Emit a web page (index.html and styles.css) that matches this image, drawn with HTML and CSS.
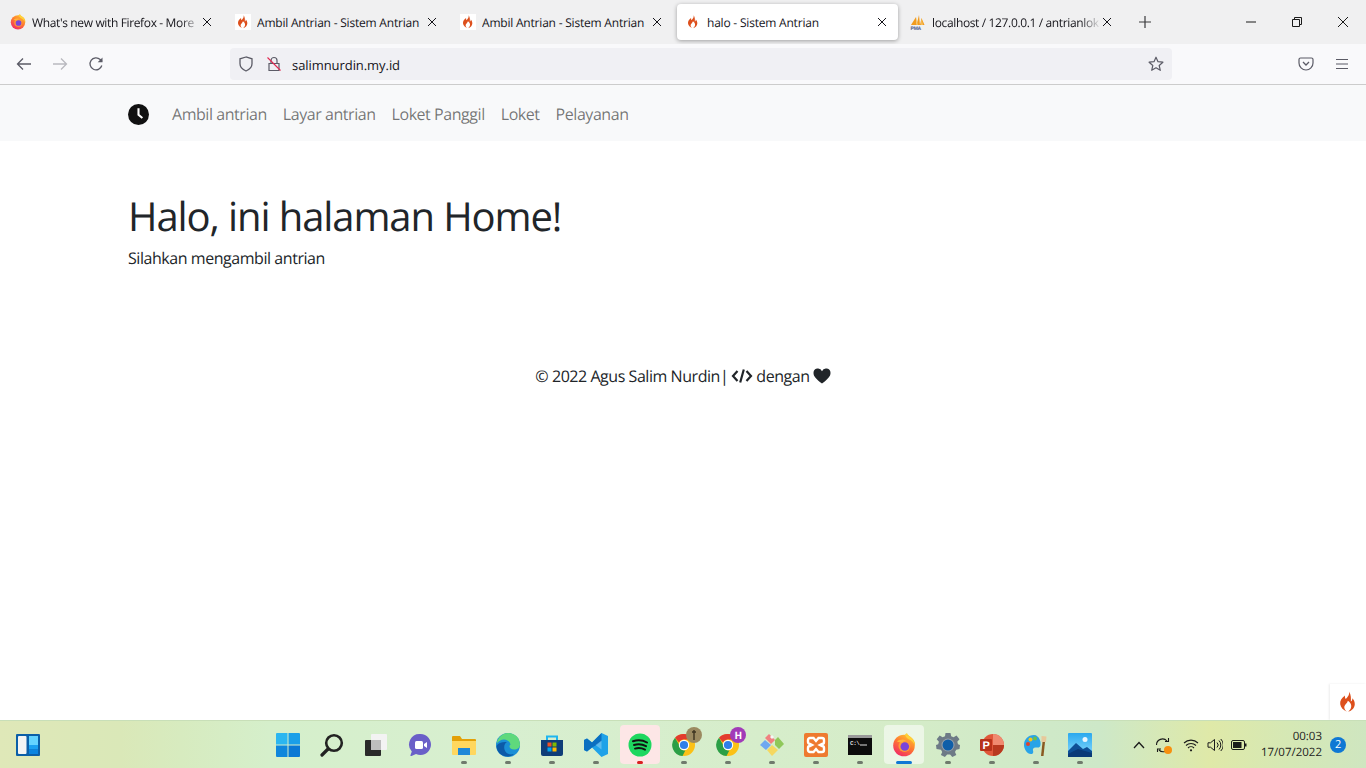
FILE: index.html
```html
<!DOCTYPE html>
<html lang="id">
<head>
<meta charset="UTF-8">
<title>halo - Sistem Antrian</title>
<link rel="stylesheet" href="styles.css">
</head>
<body>

<svg class="defs" width="0" height="0">
  <defs>
    <symbol id="flame" viewBox="0 0 24 24">
      <path fill="#dd4f1c" d="M13 .5c1 3.500-1.400 6-3.400 8.300C8.800 7.800 8.500 6.500 8.700 5 5 7.800 3 11 3.500 14.500c.5 3.600 3.400 6.500 7.300 8-2.200-1.600-3.300-3.700-2.700-5.800.6-2.200 3-3.400 3.800-6.200 2.500 1.800 4 4 3.600 6.700-.3 2.100-1.500 3.900-3.300 5.300 4.200-1 7-4.200 7.200-8.100.1-2.700-1.100-4.900-2.600-6.500 0 1.600-.4 2.800-1.700 3.600C15.400 8.500 15.500 4 13 .5z"/>
    </symbol>
    <symbol id="close" viewBox="0 0 12 12">
      <path d="M2 2l8 8M10 2l-8 8" fill="none" stroke="currentColor" stroke-width="1"/>
    </symbol>
    <symbol id="firefox" viewBox="0 0 24 24">
      <defs>
        <linearGradient id="ffbody" x1="0.800" y1="0" x2="0.200" y2="1">
          <stop offset="0" stop-color="#ffc82e"/>
          <stop offset="0.450" stop-color="#ff7a30"/>
          <stop offset="1" stop-color="#f0246a"/>
        </linearGradient>
      </defs>
      <path fill="#ffd23a" d="M15 0c-2.300 1.300-3.200 3.500-3.400 5 4 .2 7 2.500 8.200 6l3 1c.3-1.200.1-2.300-.3-3.200-.5-1.500-1.500-3-2.400-3.800.6 1.300 1 2.500 1.100 3.400C20 5 17.300 3.500 15.500 1c-.3-.4-.4-.6-.5-1z"/>
      <circle cx="12" cy="12.500" r="10.800" fill="url(#ffbody)"/>
      <path fill="#ffd23a" d="M13 1.800c5 .7 9.200 4.500 9.800 10.700-1-2.600-3-5-6-6.200-1.700-.7-3-2.400-3.800-4.500z"/>
      <circle cx="12.500" cy="13" r="6" fill="#ff9a36"/>
      <circle cx="12.800" cy="13.500" r="4.300" fill="#7b45d8"/>
      <path fill="#ffb53a" d="M5 8.500c2-1.600 4.500-2.300 7-1.700 1 .2 1.800.6 2.500 1.100-1.500-.2-3.300.3-4 1.600-1.500 0-3.500-.1-5.500-1z"/>
    </symbol>
    <symbol id="chrome" viewBox="0 0 24 24">
      <circle cx="12" cy="12" r="11" fill="#fbc116"/>
      <path fill="#e33b2e" d="M12 1a11 11 0 0 1 9.500 5.500H12a5.500 5.500 0 0 0-5 3L3 4.700A11 11 0 0 1 12 1z"/>
      <path fill="#2b9f46" d="M3 4.700L7.500 12.500a5.500 5.500 0 0 0 5.800 5L10.500 23A11 11 0 0 1 3 4.700z"/>
      <circle cx="12" cy="12" r="5.200" fill="#fff"/>
      <circle cx="12" cy="12" r="4.100" fill="#2f7fe8"/>
    </symbol>
  </defs>
</svg>

<div class="tabstrip">
  <div class="tab">
    <svg class="favicon"><use href="#firefox"/></svg>
    <span class="tab-title tab-title-fade">What's new with Firefox - More</span>
    <svg class="tab-close"><use href="#close"/></svg>
  </div>
  <div class="tab">
    <span class="favicon-box"><svg class="favicon-flame"><use href="#flame"/></svg></span>
    <span class="tab-title">Ambil Antrian - Sistem Antrian</span>
    <svg class="tab-close"><use href="#close"/></svg>
  </div>
  <div class="tab">
    <span class="favicon-box"><svg class="favicon-flame"><use href="#flame"/></svg></span>
    <span class="tab-title">Ambil Antrian - Sistem Antrian</span>
    <svg class="tab-close"><use href="#close"/></svg>
  </div>
  <div class="tab tab-active">
    <span class="favicon-box"><svg class="favicon-flame"><use href="#flame"/></svg></span>
    <span class="tab-title">halo - Sistem Antrian</span>
    <svg class="tab-close"><use href="#close"/></svg>
  </div>
  <div class="tab">
    <svg class="favicon" viewBox="0 0 16 16">
      <path fill="#f29b1d" d="M1 11L6 3l.5 8zM6.500 11L9 1l1 10zM10 11l1.500-7 3 7z"/>
      <path fill="#f6c15c" d="M6 3l2 8H6.500zM11.500 4L13 11h-2z"/>
      <text class="pma-text" x="0.500" y="15.500">PMA</text>
    </svg>
    <span class="tab-title tab-title-fade">localhost / 127.0.0.1 / antrianlok</span>
    <svg class="tab-close"><use href="#close"/></svg>
  </div>
  <svg class="newtab" viewBox="0 0 14 14"><path d="M7 1v12M1 7h12" fill="none" stroke="#3a3a3c" stroke-width="1.200"/></svg>
  <div class="window-controls">
    <svg class="win-btn" viewBox="0 0 12 12"><path d="M1 6h10" stroke="#1a1a1a" stroke-width="1"/></svg>
    <svg class="win-btn" viewBox="0 0 12 12"><path d="M1.500 3.500h7v7h-7zM3.500 3.500v-2h7v7h-2" fill="none" stroke="#1a1a1a" stroke-width="1"/></svg>
    <svg class="win-btn" viewBox="0 0 12 12"><path d="M1 1l10 10M11 1L1 11" fill="none" stroke="#1a1a1a" stroke-width="1"/></svg>
  </div>
</div>

<div class="toolbar">
  <div class="toolbar-nav">
    <svg class="tool-icon" viewBox="0 0 16 16"><path d="M15 8H1.500M7 2.500L1.500 8 7 13.500" fill="none" stroke="#5b5b66" stroke-width="1.300"/></svg>
    <svg class="tool-icon tool-icon-off" viewBox="0 0 16 16"><path d="M1 8h13.500M9 2.500L14.500 8 9 13.500" fill="none" stroke="#5b5b66" stroke-width="1.300"/></svg>
    <svg class="tool-icon" viewBox="0 0 16 16"><path d="M13.800 9.500A6 6 0 1 1 12.200 3.500L14 5.500" fill="none" stroke="#5b5b66" stroke-width="1.300"/><path d="M14.500 1.500v4.800H9.700z" fill="#5b5b66"/></svg>
  </div>
  <div class="urlbar">
    <svg class="shield" viewBox="0 0 16 16"><path d="M8 1L2 2.800v5c0 3.500 3 6 6 7.200 3-1.200 6-3.700 6-7.200v-5z" fill="none" stroke="#5b5b66" stroke-width="1.300"/></svg>
    <svg class="lock" viewBox="0 0 16 16"><path d="M3 7.500h10v7H3zM5 7.500V4.500a3 3 0 0 1 6 0v3" fill="none" stroke="#5b5b66" stroke-width="1.200"/><path d="M1.500 1.500l13 13" stroke="#e22850" stroke-width="1.100"/></svg>
    <span class="url-text">salimnurdin.my.id</span>
    <svg class="star" viewBox="0 0 16 16"><path d="M8 1.200l2 4.500 4.900.5-3.700 3.300 1.100 4.800L8 11.800l-4.300 2.500 1.100-4.800L1.100 6.200 6 5.700z" fill="none" stroke="#5b5b66" stroke-width="1.200" stroke-linejoin="round"/></svg>
  </div>
  <div class="toolbar-end">
    <svg class="tool-icon" viewBox="0 0 16 16"><path d="M2.500 2h11A1.500 1.500 0 0 1 15 3.500V7A7 7 0 0 1 1 7V3.500A1.500 1.500 0 0 1 2.500 2z" fill="none" stroke="#5b5b66" stroke-width="1.200"/><path d="M5 6l3 3 3-3" fill="none" stroke="#5b5b66" stroke-width="1.300"/></svg>
    <svg class="tool-icon" viewBox="0 0 16 16"><path d="M2 3.500h12M2 8h12M2 12.500h12" fill="none" stroke="#5b5b66" stroke-width="1.200"/></svg>
  </div>
</div>

<nav class="navbar">
  <a class="brand" href="#">
    <svg class="brand-icon" viewBox="0 0 20 20"><circle cx="10" cy="10" r="10" fill="#111"/><path d="M10 4v6.300l3.700 3" fill="none" stroke="#fff" stroke-width="2"/></svg>
  </a>
  <a class="nav-link" href="#">Ambil antrian</a>
  <a class="nav-link" href="#">Layar antrian</a>
  <a class="nav-link" href="#">Loket Panggil</a>
  <a class="nav-link" href="#">Loket</a>
  <a class="nav-link" href="#">Pelayanan</a>
</nav>

<main class="content">
  <h1>Halo, ini halaman Home!</h1>
  <p>Silahkan mengambil antrian</p>
</main>

<footer class="credit">
  <span>© 2022 Agus Salim Nurdin|</span>
  <svg class="credit-code" viewBox="0 0 22 16"><path d="M6.500 3L2 8l4.500 5M15.500 3L20 8l-4.500 5M12.800 1.500L9.200 14.500" fill="none" stroke="#212529" stroke-width="2.200"/></svg>
  <span>dengan</span>
  <svg class="credit-heart" viewBox="0 0 18 16"><path d="M9 15.500C3 11 .5 8.300.5 5A4.400 4.400 0 0 1 9 3.300 4.400 4.400 0 0 1 17.500 5c0 3.300-2.500 6-8.500 10.500z" fill="#212529"/></svg>
</footer>

<div class="ci-tab"><svg class="ci-flame"><use href="#flame"/></svg></div>

<div class="taskbar">
  <svg class="widgets" viewBox="0 0 24 22">
    <rect width="24" height="22" rx="1" fill="#0b5fa8"/>
    <rect x="2" y="2" width="8.500" height="18" rx="1" fill="#f4f4f4"/>
    <rect x="13" y="2" width="9" height="9" fill="#63d3ff"/>
    <rect x="13" y="11" width="9" height="4.500" fill="#1aa0f0"/>
    <rect x="13" y="15.500" width="9" height="4.500" fill="#0a84e0"/>
  </svg>

  <div class="dock">
    <div class="dock-item dock-plain">
      <svg class="dock-icon" viewBox="0 0 24 24">
        <path fill="#2bb6f0" d="M0 1a1 1 0 0 1 1-1h10.500v11.500H0z"/>
        <path fill="#1a9fe8" d="M12.500 0H23a1 1 0 0 1 1 1v10.500H12.500z"/>
        <path fill="#0f86dc" d="M0 12.500h11.500V24H1a1 1 0 0 1-1-1z"/>
        <path fill="#0a78d4" d="M12.500 12.500H24V23a1 1 0 0 1-1 1H12.500z"/>
      </svg>
    </div>
    <div class="dock-item dock-plain">
      <svg class="dock-icon" viewBox="0 0 24 24"><circle cx="14" cy="10" r="7.800" fill="none" stroke="#222" stroke-width="2.600"/><path d="M8 16l-6 6" stroke="#222" stroke-width="3.200" stroke-linecap="round"/></svg>
    </div>
    <div class="dock-item dock-plain">
      <svg class="dock-icon" viewBox="0 0 24 24">
        <rect x="1" y="7" width="16" height="16" rx="1" fill="#2a2a2a"/>
        <rect x="7" y="1" width="16" height="16" rx="1" fill="#f3f3f3"/>
        <rect x="7" y="7" width="10" height="10" fill="#bdbdbd"/>
      </svg>
    </div>
    <div class="dock-item dock-plain">
      <svg class="dock-icon" viewBox="0 0 24 24">
        <path fill="#6a5fc8" d="M12.500 1a10.500 10.500 0 1 1-4.500 20l-4.500 2c-.8.300-1.300-.3-1-1l1.300-3.500A10.500 10.500 0 0 1 12.500 1z"/>
        <rect x="7" y="8" width="8" height="8" rx="1.500" fill="#fff"/>
        <path fill="#fff" d="M16 11l3-2v6l-3-2z"/>
      </svg>
    </div>
    <div class="dock-item">
      <svg class="dock-icon" viewBox="0 0 24 24">
        <path fill="#e3a008" d="M0 4a1 1 0 0 1 1-1h7l2 3h13a1 1 0 0 1 1 1v3H0z"/>
        <path fill="#ffd75e" d="M0 8h24v13a1 1 0 0 1-1 1H1a1 1 0 0 1-1-1z"/>
        <rect x="6" y="15" width="12" height="7" fill="#1e88d8"/>
      </svg>
    </div>
    <div class="dock-item">
      <svg class="dock-icon" viewBox="0 0 24 24">
        <circle cx="12" cy="12" r="12" fill="#1a8fd6"/>
        <path fill="#5fd97c" d="M12 0c7 0 12 5 12 11.500 0 3-2.500 5-6 5-3 0-4.500-1.500-4.500-3 0-1 .5-1.500 1-2C14 8.500 11 6.500 8 6.500 5 6.500 2.200 8.300.7 10.500 1.800 4.500 6.500 0 12 0z"/>
        <path fill="#0c5aa8" d="M.5 13c0 5 4 10.500 11 10.500 2.500 0 5-1 6.500-2.500-5 1.500-8.500-1-9.500-4.500C7.500 13 9 10 11 9 6.500 8.500 2 10 .5 13z"/>
      </svg>
    </div>
    <div class="dock-item">
      <svg class="dock-icon" viewBox="0 0 24 24">
        <path fill="none" stroke="#1fb6ef" stroke-width="2" d="M7 7V3.500h10V7"/>
        <path fill="#0f3d78" d="M1 7h22v14a2 2 0 0 1-2 2H3a2 2 0 0 1-2-2z"/>
        <rect x="7.500" y="9.500" width="4" height="4" fill="#f25022"/>
        <rect x="12.500" y="9.500" width="4" height="4" fill="#7fba00"/>
        <rect x="7.500" y="14.500" width="4" height="4" fill="#00a4ef"/>
        <rect x="12.500" y="14.500" width="4" height="4" fill="#ffb900"/>
      </svg>
    </div>
    <div class="dock-item">
      <svg class="dock-icon" viewBox="0 0 24 24">
        <path fill="#1fa2e8" d="M17.500 0L24 3v18l-6.500 3-9.500-9.500L3 18.500 0 17V7l3-1.500 5 4z"/>
        <path fill="#0b6fc0" d="M3 5.500L0 7v10l3 1.500 5-4 4.500-2.500L8 9.500zM17.500 0L8 9.500 12.500 12 17.500 8z"/>
        <path fill="#e9f6ff" fill-opacity="0.300" d="M17.500 7.500v9L11.500 12z"/>
      </svg>
    </div>
    <div class="dock-item dock-spotify">
      <svg class="dock-icon" viewBox="0 0 24 24">
        <circle cx="12" cy="12" r="11.500" fill="#1ed760"/>
        <path d="M5 8.200c5-1.500 10-1 14 1.300M6 12c4-1.100 8.500-.7 12 1.200M7 15.600c3.500-.9 7-.5 10 1" fill="none" stroke="#111" stroke-width="2" stroke-linecap="round"/>
      </svg>
    </div>
    <div class="dock-item">
      <svg class="dock-icon" viewBox="0 0 24 24"><use href="#chrome"/></svg>
      <span class="profile-badge profile-photo">
        <svg viewBox="0 0 16 16"><circle cx="8" cy="8" r="8" fill="#9b8a60"/><path d="M8 3v10M6 5h4" stroke="#3d3420" stroke-width="1.400"/></svg>
      </span>
    </div>
    <div class="dock-item">
      <svg class="dock-icon" viewBox="0 0 24 24"><use href="#chrome"/></svg>
      <span class="profile-badge profile-letter">H</span>
    </div>
    <div class="dock-item">
      <svg class="dock-icon" viewBox="0 0 24 24">
        <path fill="#f08080" d="M5 5l4-4 6 6-4 4z"/>
        <path fill="#8fc85a" d="M15 7l3-3 6 7-5 5-4-4z"/>
        <path fill="#6fa8f0" d="M0 12l5-5 6 5-5 5z"/>
        <path fill="#f5d860" d="M7 17l5-5 6 5-6 6z"/>
        <path fill="#f6f6f6" d="M10 4l2-2 2 2-2 2z"/>
      </svg>
    </div>
    <div class="dock-item">
      <svg class="dock-icon" viewBox="0 0 24 24">
        <rect width="24" height="24" rx="2" fill="#ee7a30"/>
        <path d="M6 5h3.500l2.500 3 2.500-3H18a2 2 0 0 1 2 2v2a2 2 0 0 1-2 2l-2 1 2 1a2 2 0 0 1 2 2v2a2 2 0 0 1-2 2h-3.500L12 16l-2.500 3H6a2 2 0 0 1-2-2v-2a2 2 0 0 1 2-2l2-1-2-1a2 2 0 0 1-2-2V7a2 2 0 0 1 2-2z" fill="none" stroke="#fff" stroke-width="2.400"/>
      </svg>
    </div>
    <div class="dock-item">
      <svg class="dock-icon" viewBox="0 0 24 24">
        <rect y="2" width="24" height="20" fill="#0c0c0c"/>
        <rect y="2" width="24" height="3" fill="#9a9a9a"/>
        <text class="term-text" x="2" y="12">C:\</text>
        <path d="M12 12h7" stroke="#ddd" stroke-width="1"/>
      </svg>
    </div>
    <div class="dock-item dock-active">
      <svg class="dock-icon" viewBox="0 0 24 24"><use href="#firefox"/></svg>
    </div>
    <div class="dock-item">
      <svg class="dock-icon" viewBox="0 0 24 24">
        <path fill="#6d7a86" d="M9.500 0h5l.7 3.300 2.400 1 2.900-1.800 3 3.700-2.200 2.500.7 2.500L24 12l-.5 4-3.300.8-1.200 2.200 1.300 3-4 2-2.200-2.500h-3l-2.200 2.500-4-2 1.300-3-1.200-2.200L.5 16 0 12l2.200-.8.700-2.500L.7 6.200l3-3.700 2.900 1.800 2.400-1z"/>
        <circle cx="12" cy="12" r="6.500" fill="#fff" fill-opacity="0.300"/>
        <circle cx="12" cy="12" r="5.500" fill="#0f5ea8"/>
      </svg>
    </div>
    <div class="dock-item">
      <svg class="dock-icon" viewBox="0 0 24 24">
        <circle cx="13" cy="12" r="11" fill="#e0573a"/>
        <path fill="#f08a70" d="M13 1a11 11 0 0 1 11 11H13z"/>
        <path fill="#b8391f" d="M13 12h11a11 11 0 0 1-11 11z"/>
        <rect x="0" y="6" width="12" height="12" rx="1" fill="#b8321a"/>
        <text class="ppt-text" x="2.600" y="15.500">P</text>
      </svg>
    </div>
    <div class="dock-item">
      <svg class="dock-icon" viewBox="0 0 24 24">
        <path fill="#29a3e8" d="M10 2C4 2 0 6.500 0 12c0 4 3 9 7 9 2.500 0 2.500-2 2-3.500-.5-1.500.5-3 2.500-3 1.500 0 3.500.5 4.500-1 2-3-.5-11.500-6-11.500z"/>
        <circle cx="4" cy="11" r="2" fill="#e2402a"/>
        <circle cx="6.500" cy="6.500" r="2" fill="#f5c518"/>
        <circle cx="11" cy="5.500" r="2" fill="#6cc04a"/>
        <path d="M18.500 9l-1.500 14h2.500L21 9z" fill="#8a5a22"/>
        <path d="M17.500 3l5 .5L22 9h-4.500z" fill="#e8c89a"/>
      </svg>
    </div>
    <div class="dock-item">
      <svg class="dock-icon" viewBox="0 0 24 24">
        <defs>
          <linearGradient id="photosky" x1="0" y1="0" x2="0" y2="1">
            <stop offset="0" stop-color="#2aa8ee"/>
            <stop offset="1" stop-color="#8cdcff"/>
          </linearGradient>
        </defs>
        <rect width="24" height="24" rx="1" fill="url(#photosky)"/>
        <circle cx="17" cy="6.500" r="2.500" fill="#eaf6ff"/>
        <path fill="#0e4f96" d="M0 18l8-8 7 6 4-2 5 4v6H0z"/>
        <path fill="#0a3a78" d="M0 21l10-5 14 4v4H0z"/>
      </svg>
    </div>
  </div>

  <div class="tray">
    <svg class="tray-chevron" viewBox="0 0 12 8"><path d="M1 7l5-5.500L11 7" fill="none" stroke="#1a1a1a" stroke-width="1.300"/></svg>
    <span class="tray-sync">
      <svg class="tray-icon" viewBox="0 0 16 16"><path d="M1.500 8a6 6 0 0 1 10.500-4M13.500 1v3.500H10M14 10a6 6 0 0 1-10 3M2.500 15v-3H6" fill="none" stroke="#1a1a1a" stroke-width="1.100"/></svg>
      <span class="sync-dot"></span>
    </span>
    <svg class="tray-icon tray-wifi" viewBox="0 0 16 16"><path d="M1 6a10 10 0 0 1 14 0M3 8.500a7.200 7.200 0 0 1 10 0M5 11a4.300 4.300 0 0 1 6 0" fill="none" stroke="#1a1a1a" stroke-width="1.100"/><circle cx="8" cy="13.300" r="1.100" fill="#1a1a1a"/></svg>
    <svg class="tray-icon tray-sound" viewBox="0 0 16 16"><path d="M1 5.800h2.500L7.500 2.500v11L3.500 10.200H1zM10 5.500a3.500 3.500 0 0 1 0 5M12 3.500a6.500 6.500 0 0 1 0 9M13.800 2a8.500 8.500 0 0 1 0 12" fill="none" stroke="#1a1a1a" stroke-width="1"/></svg>
    <svg class="tray-icon tray-battery" viewBox="0 0 16 16"><rect x="0.500" y="3.500" width="13" height="9" rx="1.500" fill="none" stroke="#1a1a1a" stroke-width="1"/><rect x="2" y="5" width="8.500" height="6" fill="#1a1a1a"/><rect x="14" y="6.500" width="1.500" height="3" fill="#1a1a1a"/></svg>
    <div class="tray-clock">
      <span>00:03</span>
      <span>17/07/2022</span>
    </div>
    <span class="notif">2</span>
  </div>
</div>

</body>
</html>
```

FILE: styles.css
```css
*{box-sizing:border-box}
html,body{margin:0; height:100%}
body{height:768px; overflow:hidden; display:flex; flex-direction:column; position:relative; background:#fff; color:#212529; font-family:"Open Sans","Noto Sans","Liberation Sans",sans-serif; font-size:16px; letter-spacing:-.028em; text-rendering:geometricPrecision}
.defs{position:absolute}
svg{display:block; flex:none}

/* browser tabs */
.tabstrip{height:44px; background:#f0f0f1; display:flex; align-items:center; padding-left:2px; font-size:12px; color:#15141a; letter-spacing:-.017em}
.tab{width:221px; height:36px; margin-right:4px; padding:0 10px 0 8px; display:flex; align-items:center; border-radius:4px}
.tab-active{background:#fff; box-shadow:0 1px 4px rgba(0,0,0,.35)}
.favicon{width:16px; height:16px; margin-right:6px}
.favicon-box{width:16px; height:16px; margin-right:6px; background:#fff; display:flex; align-items:center; justify-content:center}
.favicon-flame{width:14px; height:14px}
.tab-title{flex:1; white-space:nowrap; overflow:hidden}
.tab-title-fade{letter-spacing:-.03em; mask-image:linear-gradient(to right,#000 88%,transparent)}
.tab-close{width:12px; height:12px; color:#15141a}
.pma-text{font:bold 5px "Liberation Sans",sans-serif; fill:#4a5a8a}
.newtab{width:14px; height:14px; margin-left:11px}
.window-controls{margin-left:auto; display:flex; align-items:center}
.win-btn{width:12px; height:12px; margin:0 17px}

/* toolbar */
.toolbar{height:41px; flex:none; background:#f9f9fb; border-bottom:1px solid #ccc; display:flex; align-items:center; padding:0 16px}
.toolbar-nav{width:214px; display:flex; gap:20px}
.tool-icon{width:16px; height:16px}
.tool-icon-off{opacity:.4}
.urlbar{width:942px; height:32px; background:#f0f0f4; border-radius:4px; display:flex; align-items:center; padding:0 8px; font-size:13px; color:#15141a; letter-spacing:-.005em}
.shield{width:16px; height:16px}
.lock{width:16px; height:16px; margin-left:12px}
.url-text{margin-left:10px; padding-top:1px}
.star{width:16px; height:16px; margin-left:auto}
.toolbar-end{margin-left:auto; display:flex; gap:20px}

/* page */
.navbar{height:56px; flex:none; background:#f8f9fa; display:flex; align-items:center; padding-left:128px}
.brand{margin-right:15px; padding-top:3px}
.brand-icon{width:21px; height:21px}
.nav-link{padding:9px 8px 7px; color:rgba(0,0,0,.55); text-decoration:none; letter-spacing:-.028em}
.content{padding:51px 128px 0}
h1{margin:0 0 8px; font-size:40px; font-weight:400; line-height:48px; letter-spacing:-.0275em}
p{margin:0; line-height:20px}
.credit{margin-top:96px; display:flex; justify-content:center; align-items:center; gap:3px; line-height:24px}
.credit-code{width:22px; height:16px}
.credit-heart{width:18px; height:16px}
.ci-tab{position:absolute; right:0; bottom:48px; width:36px; height:36px; background:#fff; box-shadow:-1px 0 2px rgba(0,0,0,.08); display:flex; align-items:center; justify-content:center}
.ci-flame{width:22px; height:22px}

/* windows taskbar */
.taskbar{height:48px; margin-top:auto; border-top:1px solid #c8dfb8; display:flex; align-items:center; position:relative; background:linear-gradient(to right,#dfe8b8 0,#dae8b8 120px,#d7ebbf 180px,#d5efcb 270px,#d8efd0 500px,#d5ecc8 900px,#cde8c8 1100px,#dfe9a8 1210px,#d5e8b5 1290px,#cfe6c0 1366px); font-size:12px}
.widgets{width:24px; height:22px; margin-left:16px}
.dock{display:flex; margin-left:226px}
.dock-item{width:44px; height:47px; position:relative; display:flex; align-items:center; justify-content:center}
.dock-icon{width:24px; height:24px}
.dock-item::after{content:""; position:absolute; left:19px; top:40px; width:6px; height:3px; border-radius:2px; background:#6f7a6c}
.dock-plain::after{display:none}
.dock-spotify::before,.dock-active::before{content:""; position:absolute; left:2px; top:4px; width:40px; height:39px; border-radius:4px}
.dock-spotify::before{background:#fde6e6}
.dock-active::before{background:rgba(255,255,255,.55)}
.dock-spotify .dock-icon,.dock-active .dock-icon{position:relative}
.dock-spotify::after{background:#d92020}
.dock-active::after{left:14px; width:16px; background:#0f78d4}
.profile-badge{position:absolute; left:24px; top:6px; width:16px; height:16px; border-radius:50%}
.profile-letter{background:#a13bb8; color:#fff; font-size:10px; font-weight:700; line-height:16px; text-align:center}
.term-text{font:bold 6px "Liberation Mono",monospace; fill:#ddd}
.ppt-text{font:bold 11px "Liberation Sans",sans-serif; fill:#fff}
.tray{margin-left:auto; display:flex; align-items:center; color:#1a1a1a}
.tray-chevron{width:12px; height:8px}
.tray-sync{position:relative; margin-left:10px}
.tray-icon{width:16px; height:16px}
.sync-dot{position:absolute; right:-1px; bottom:-1px; width:8px; height:8px; border-radius:50%; background:#f7900f}
.tray-wifi{margin-left:12px}
.tray-sound{margin-left:8px}
.tray-battery{margin-left:8px}
.tray-clock{width:75px; display:flex; flex-direction:column; align-items:flex-end; line-height:16px; font-size:11.500px; letter-spacing:0}
.notif{width:16px; height:16px; margin:0 20px 0 8px; border-radius:50%; background:#0f78d4; color:#fff; font-size:11px; line-height:16px; text-align:center}
```
